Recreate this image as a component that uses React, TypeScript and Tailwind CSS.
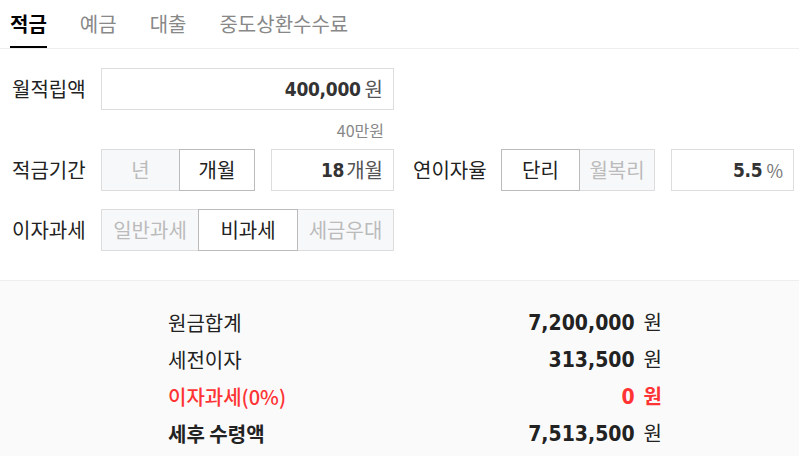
import React from 'react'

const kr = "font-['Noto_Sans_CJK_KR','Noto_Sans',sans-serif]"
const num = "font-['DejaVu_Sans_Condensed','DejaVu_Sans',sans-serif] font-bold"

function Segment({ items, selected, widths }: { items: string[]; selected: number; widths: string[] }) {
  return (
    <div className="flex h-[42px]">
      {items.map((label, i) => {
        const on = i === selected
        return (
          <div
            key={label}
            className={`${widths[i]} h-full flex items-center justify-center text-[20px] leading-none border ${
              on ? 'bg-white text-[#222] border-[#bbb] z-10' : 'bg-[#f7f8fa] text-[#bbb] border-[#ddd]'
            } ${i > 0 ? '-ml-px' : ''}`}
          >
            {label}
          </div>
        )
      })}
    </div>
  )
}

function Field({ value, unit, width, unitClass = 'text-[20px] text-[#555]' }: { value: string; unit: string; width: string; unitClass?: string }) {
  return (
    <div className={`${width} h-[42px] border border-[#ddd] bg-white flex items-center justify-end pr-[10px]`}>
      <span className={`${num} text-[19px] text-[#333] leading-none tracking-[-0.3px]`}>{value}</span>
      <span className={`${unitClass} leading-none ml-[2px]`}>{unit}</span>
    </div>
  )
}

function Row({ label, value, red, bold }: { label: string; value: string; red?: boolean; bold?: boolean }) {
  const color = red ? 'text-[#f33]' : 'text-[#222]'
  return (
    <div className={`h-[37px] flex items-center justify-between ${color}`}>
      <span className={`text-[20px] leading-none ${bold ? 'font-bold' : red ? 'font-medium' : ''}`}>{label}</span>
      <span className="flex items-baseline">
        <span className={`${num} text-[21px] leading-none`}>{value}</span>
        <span className={`text-[20px] leading-none ml-[9px] ${red ? 'font-bold' : ''}`}>원</span>
      </span>
    </div>
  )
}

export default function App() {
  const tabs = ['적금', '예금', '대출', '중도상환수수료']

  return (
    <div className={`w-[799px] h-[456px] bg-white overflow-hidden ${kr}`}>
      {/* tabs */}
      <div className="h-[49px] border-b border-[#eee] flex pl-[10px] gap-[33px]">
        {tabs.map((t, i) => (
          <div
            key={t}
            className={`h-full flex items-center text-[20px] leading-none ${
              i === 0 ? 'text-black font-bold border-b-2 border-black' : 'text-[#888]'
            }`}
          >
            <span className={i === 0 ? 'mt-[2px]' : ''}>{t}</span>
          </div>
        ))}
      </div>

      {/* inputs */}
      <div className="pt-[19px] pl-[12px] pb-[29px] text-[#222]">
        <div className="flex items-center h-[42px]">
          <div className="w-[89px] text-[20px] leading-none">월적립액</div>
          <Field value="400,000" unit="원" width="w-[293px]" unitClass="text-[20px] text-[#555] ml-[4px]" />
        </div>
        <div className="w-[382px] h-[39px] flex items-center justify-end pr-[10px] text-[16px] text-[#888] leading-none">
          40만원
        </div>

        <div className="flex items-center h-[42px]">
          <div className="w-[89px] text-[20px] leading-none">적금기간</div>
          <Segment items={['년', '개월']} selected={1} widths={['w-[79px]', 'w-[76px]']} />
          <div className="ml-[16px]">
            <Field value="18" unit="개월" width="w-[123px]" />
          </div>
          <div className="w-[88px] ml-[19px] text-[20px] leading-none">연이자율</div>
          <Segment items={['단리', '월복리']} selected={0} widths={['w-[79px]', 'w-[76px]']} />
          <div className="ml-[16px]">
            <Field value="5.5" unit="%" width="w-[123px]" unitClass="text-[18px] text-[#777] ml-[4px]" />
          </div>
        </div>

        <div className="flex items-center h-[42px] mt-[18px]">
          <div className="w-[89px] text-[20px] leading-none">이자과세</div>
          <Segment items={['일반과세', '비과세', '세금우대']} selected={1} widths={['w-[98px]', 'w-[100px]', 'w-[97px]']} />
        </div>
      </div>

      {/* result */}
      <div className="border-t border-[#eee] bg-[#fafafa] h-full pt-[23px]">
        <div className="ml-[168px] w-[494px]">
          <Row label="원금합계" value="7,200,000" />
          <Row label="세전이자" value="313,500" />
          <Row label="이자과세(0%)" value="0" red />
          <Row label="세후 수령액" value="7,513,500" bold />
        </div>
      </div>
    </div>
  )
}
